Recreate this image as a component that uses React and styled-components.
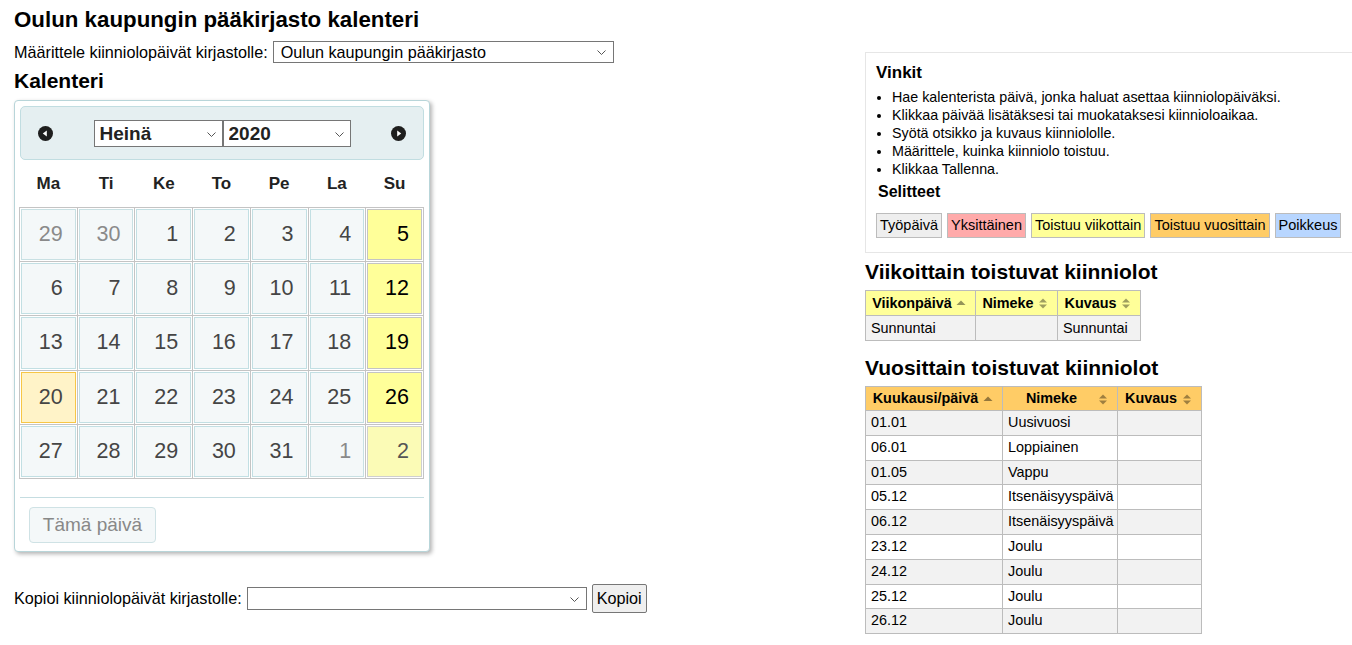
import React from 'react';
import styled, { createGlobalStyle } from 'styled-components';

const GlobalStyle = createGlobalStyle`
  * {
    box-sizing: border-box;
  }

  body {
    margin: 0;
    background: #fff;
    color: #000;
    font-family: "Liberation Sans", Arial, sans-serif;
    overflow: hidden;
  }
`;

const Page = styled.div`
  display: flex;
  align-items: flex-start;
  padding-left: 14px;
`;

const LeftCol = styled.div`
  flex: none;
  width: 851px;
`;

const RightCol = styled.div`
  flex: none;
  width: 500px;
  padding-top: 52px;
`;

const Title = styled.h1`
  margin: 7px 0 0;
  font-size: 22.3px;
  line-height: 26px;
  font-weight: bold;
`;

const FieldRow = styled.div`
  display: flex;
  align-items: center;
  gap: 5px;
  margin-top: ${p => p.$top}px;
  font-size: 16.2px;
`;

const SelectWrap = styled.span`
  position: relative;
  display: inline-flex;
`;

const Chevron = styled.svg`
  position: absolute;
  top: 50%;
  right: ${p => p.$right}px;
  margin-top: -2px;
  pointer-events: none;
`;

const Select = styled.select`
  appearance: none;
  width: ${p => p.$w}px;
  height: ${p => p.$h}px;
  padding: 0 20px 0 7px;
  border: 1px solid #767676;
  border-radius: 0;
  background: #fff;
  color: #000;
  font-family: inherit;
  font-size: 16.2px;
`;

const Heading = styled.h2`
  margin: ${p => p.$top}px 0 0;
  font-size: 21px;
  line-height: 24px;
  font-weight: bold;
`;

const Calendar = styled.div`
  width: 416px;
  margin-top: 7px;
  padding: 4px;
  background: #fff;
  border: 1px solid #b8d5d9;
  border-radius: 4px;
  box-shadow: 2px 2px 4px rgba(0, 0, 0, 0.3);
`;

const CalHeader = styled.div`
  display: flex;
  align-items: center;
  justify-content: space-between;
  height: 54px;
  margin: 1px;
  padding: 0 17px 0 17px;
  background: #e5eff1;
  border: 1px solid #c1dde1;
  border-radius: 5px;
`;

const HeadSelects = styled.div`
  display: flex;
  margin-top: 1px;
`;

const HeadSelect = styled.select`
  appearance: none;
  width: ${p => p.$w}px;
  height: 27px;
  padding: 0 18px 0 5px;
  border: 1px solid #767676;
  border-radius: 0;
  background: #fff;
  color: #222;
  font-family: inherit;
  font-size: 19px;
  font-weight: bold;
`;

const DayTable = styled.table`
  width: 405px;
  border-collapse: collapse;
  table-layout: fixed;
`;

const DayName = styled.th`
  height: 46px;
  padding: 0;
  font-size: 17px;
  font-weight: bold;
  text-align: center;
  color: #222;
`;

const DayCell = styled.td`
  padding: 1px;
  border: 1px solid #c4c4c4;
`;

const dayLook = {
  normal: { bg: '#f4f8f9', border: '#c2dfe3', color: '#454545' },
  other: { bg: '#f4f8f9', border: '#c8e0e3', color: '#8a8a8a' },
  sunday: { bg: '#ffff99', border: '#c4c4c4', color: '#000' },
  today: { bg: '#fff3c8', border: '#f7c646', color: '#454545' },
  otherSunday: { bg: '#fbfbb6', border: '#cfcfcf', color: '#555' },
};

const DayLink = styled.a`
  display: block;
  height: 51.4px;
  padding-right: 12px;
  border: 1px solid ${p => dayLook[p.$kind].border};
  background: ${p => dayLook[p.$kind].bg};
  color: ${p => dayLook[p.$kind].color};
  font-size: 21.5px;
  line-height: 49px;
  text-align: right;
  text-decoration: none;
`;

const Separator = styled.hr`
  height: 0;
  margin: 18px 1px 0;
  border: 0;
  border-top: 1px solid #c5dde1;
`;

const CalFooter = styled.div`
  padding: 9px 0 4px 10px;
`;

const TodayButton = styled.button`
  width: 127px;
  height: 36px;
  padding: 0;
  background: #f4f8f9;
  border: 1px solid #cfe2e5;
  border-radius: 4px;
  color: #888;
  font-family: inherit;
  font-size: 19px;
`;

const CopyButton = styled.button`
  height: 29px;
  padding: 0 4px;
  background: #efefef;
  border: 1px solid #767676;
  border-radius: 2px;
  color: #000;
  font-family: inherit;
  font-size: 16.2px;
`;

const TipsBox = styled.div`
  height: 201px;
  padding: 10px 10px 15px;
  border: 1px solid #e6e6e6;
`;

const BoxTitle = styled.div`
  margin: ${p => p.$top}px 0 0 ${p => p.$left}px;
  font-size: ${p => p.$size}px;
  line-height: 20px;
  font-weight: bold;
`;

const TipList = styled.ul`
  margin: 5px 0 0;
  padding-left: 16px;
  font-size: 14.3px;
  line-height: 18px;
`;

const Legend = styled.div`
  display: flex;
  gap: 5px;
  margin-top: 11px;
`;

const LegendItem = styled.span`
  height: 25px;
  padding: 0 3px;
  background: ${p => p.$bg};
  border: 1px solid #bcbcbc;
  font-size: 14.5px;
  line-height: 23px;
  white-space: nowrap;
`;

const DataTable = styled.table`
  margin-top: 6px;
  border-collapse: collapse;
  table-layout: fixed;
  font-size: 14.4px;
`;

const Th = styled.th`
  position: relative;
  padding: 3px 22px 3px 5px;
  background: ${p => p.$bg};
  border: 1px solid #bcbcbc;
  font-weight: bold;
  line-height: ${p => p.$lh}px;
  text-align: center;
  white-space: nowrap;
`;

const Td = styled.td`
  padding: 3px 5px;
  background: ${p => (p.$odd ? '#f2f2f2' : '#fff')};
  border: 1px solid #bcbcbc;
  line-height: ${p => p.$lh || 18}px;
  white-space: nowrap;
`;

const SortMark = styled.svg`
  position: absolute;
  top: 50%;
  right: 9px;
  margin-top: -5px;
`;

function NavIcon({ dir }) {
  return (
    <svg width='15' height='15' viewBox='0 0 15 15'>
      <circle cx='7.5' cy='7.5' r='7.5' fill='#1e1e1e' />
      {dir === 'prev' ? (
        <path d='M4.8 7.5 L8.8 4.5 L8.8 10.5 Z' fill='#fff' />
      ) : (
        <path d='M10.2 7.5 L6.2 4.5 L6.2 10.5 Z' fill='#fff' />
      )}
    </svg>
  );
}

function Sort({ asc }) {
  return (
    <SortMark width='10' height='11' viewBox='0 0 10 11'>
      {asc ? (
        <path d='M0.5 7 L5 2.5 L9.5 7 Z' fill='rgba(0,0,0,0.42)' />
      ) : (
        <>
          <path d='M1 4.6 L5 0.5 L9 4.6 Z' fill='rgba(0,0,0,0.38)' />
          <path d='M1 6.4 L5 10.5 L9 6.4 Z' fill='rgba(0,0,0,0.38)' />
        </>
      )}
    </SortMark>
  );
}

function ChevronDown({ right }) {
  return (
    <Chevron $right={right} width='9' height='5' viewBox='0 0 9 5'>
      <path d='M0.5 0.5 L4.5 4.5 L8.5 0.5' fill='none' stroke='#555' strokeWidth='1' />
    </Chevron>
  );
}

const weeks = [
  [[29, 'other'], [30, 'other'], [1], [2], [3], [4], [5, 'sunday']],
  [[6], [7], [8], [9], [10], [11], [12, 'sunday']],
  [[13], [14], [15], [16], [17], [18], [19, 'sunday']],
  [[20, 'today'], [21], [22], [23], [24], [25], [26, 'sunday']],
  [[27], [28], [29], [30], [31], [1, 'other'], [2, 'otherSunday']],
];

const dayNames = ['Ma', 'Ti', 'Ke', 'To', 'Pe', 'La', 'Su'];

const tips = [
  'Hae kalenterista päivä, jonka haluat asettaa kiinniolopäiväksi.',
  'Klikkaa päivää lisätäksesi tai muokataksesi kiinnioloaikaa.',
  'Syötä otsikko ja kuvaus kiinniololle.',
  'Määrittele, kuinka kiinniolo toistuu.',
  'Klikkaa Tallenna.',
];

const legend = [
  ['Työpäivä', '#eeeeee'],
  ['Yksittäinen', '#ffaaaa'],
  ['Toistuu viikottain', '#ffff99'],
  ['Toistuu vuosittain', '#ffcc66'],
  ['Poikkeus', '#b8d6ff'],
];

const yearly = [
  ['01.01', 'Uusivuosi'],
  ['06.01', 'Loppiainen'],
  ['01.05', 'Vappu'],
  ['05.12', 'Itsenäisyyspäivä'],
  ['06.12', 'Itsenäisyyspäivä'],
  ['23.12', 'Joulu'],
  ['24.12', 'Joulu'],
  ['25.12', 'Joulu'],
  ['26.12', 'Joulu'],
];

const months = ['Tammi', 'Helmi', 'Maalis', 'Huhti', 'Touko', 'Kesä', 'Heinä', 'Elo', 'Syys', 'Loka', 'Marras', 'Joulu'];

export default function App() {
  return (
    <>
      <GlobalStyle />
      <Page>
        <LeftCol>
          <Title>Oulun kaupungin pääkirjasto kalenteri</Title>
          <FieldRow $top={8}>
            <label htmlFor='branch'>Määrittele kiinniolopäivät kirjastolle:</label>
            <SelectWrap>
              <Select id='branch' $w={341} $h={22} defaultValue='oulu'>
                <option value='oulu'>Oulun kaupungin pääkirjasto</option>
              </Select>
              <ChevronDown right={8} />
            </SelectWrap>
          </FieldRow>
          <Heading $top={6}>Kalenteri</Heading>
          <Calendar>
            <CalHeader>
              <NavIcon dir='prev' />
              <HeadSelects>
                <SelectWrap>
                  <HeadSelect $w={129} defaultValue='Heinä'>
                    {months.map(m => (
                      <option key={m} value={m}>
                        {m}
                      </option>
                    ))}
                  </HeadSelect>
                  <ChevronDown right={7} />
                </SelectWrap>
                <SelectWrap>
                  <HeadSelect $w={128} defaultValue='2020'>
                    <option value='2020'>2020</option>
                  </HeadSelect>
                  <ChevronDown right={7} />
                </SelectWrap>
              </HeadSelects>
              <NavIcon dir='next' />
            </CalHeader>
            <DayTable>
              <thead>
                <tr>
                  {dayNames.map(d => (
                    <DayName key={d}>{d}</DayName>
                  ))}
                </tr>
              </thead>
              <tbody>
                {weeks.map((week, i) => (
                  <tr key={i}>
                    {week.map(([n, kind = 'normal'], j) => (
                      <DayCell key={j}>
                        <DayLink $kind={kind}>{n}</DayLink>
                      </DayCell>
                    ))}
                  </tr>
                ))}
              </tbody>
            </DayTable>
            <Separator />
            <CalFooter>
              <TodayButton>Tämä päivä</TodayButton>
            </CalFooter>
          </Calendar>
          <FieldRow $top={32}>
            <label htmlFor='copy'>Kopioi kiinniolopäivät kirjastolle:</label>
            <SelectWrap>
              <Select id='copy' $w={340} $h={23} defaultValue=''>
                <option value=''></option>
              </Select>
              <ChevronDown right={8} />
            </SelectWrap>
            <CopyButton>Kopioi</CopyButton>
          </FieldRow>
        </LeftCol>

        <RightCol>
          <TipsBox>
            <BoxTitle $size={17} $top={0} $left={0}>
              Vinkit
            </BoxTitle>
            <TipList>
              {tips.map(t => (
                <li key={t}>{t}</li>
              ))}
            </TipList>
            <BoxTitle $size={16} $top={4} $left={2}>
              Selitteet
            </BoxTitle>
            <Legend>
              {legend.map(([label, bg]) => (
                <LegendItem key={label} $bg={bg}>
                  {label}
                </LegendItem>
              ))}
            </Legend>
          </TipsBox>

          <Heading $top={7}>Viikoittain toistuvat kiinniolot</Heading>
          <DataTable style={{ width: 275 }}>
            <colgroup>
              <col style={{ width: 110 }} />
              <col style={{ width: 82 }} />
              <col style={{ width: 83 }} />
            </colgroup>
            <thead>
              <tr>
                <Th $bg='#ffff99' $lh={18}>
                  Viikonpäivä
                  <Sort asc />
                </Th>
                <Th $bg='#ffff99' $lh={18}>
                  Nimeke
                  <Sort />
                </Th>
                <Th $bg='#ffff99' $lh={18}>
                  Kuvaus
                  <Sort />
                </Th>
              </tr>
            </thead>
            <tbody>
              <tr>
                <Td $odd>Sunnuntai</Td>
                <Td $odd></Td>
                <Td $odd>Sunnuntai</Td>
              </tr>
            </tbody>
          </DataTable>

          <Heading $top={15}>Vuosittain toistuvat kiinniolot</Heading>
          <DataTable style={{ width: 336 }}>
            <colgroup>
              <col style={{ width: 137 }} />
              <col style={{ width: 115 }} />
              <col style={{ width: 84 }} />
            </colgroup>
            <thead>
              <tr>
                <Th $bg='#ffcc66' $lh={17}>
                  Kuukausi/päivä
                  <Sort asc />
                </Th>
                <Th $bg='#ffcc66' $lh={17}>
                  Nimeke
                  <Sort />
                </Th>
                <Th $bg='#ffcc66' $lh={17}>
                  Kuvaus
                  <Sort />
                </Th>
              </tr>
            </thead>
            <tbody>
              {yearly.map(([date, name], i) => (
                <tr key={date}>
                  <Td $odd={i % 2 === 0} $lh={17.8}>{date}</Td>
                  <Td $odd={i % 2 === 0} $lh={17.8}>{name}</Td>
                  <Td $odd={i % 2 === 0} $lh={17.8}></Td>
                </tr>
              ))}
            </tbody>
          </DataTable>
        </RightCol>
      </Page>
    </>
  );
}
